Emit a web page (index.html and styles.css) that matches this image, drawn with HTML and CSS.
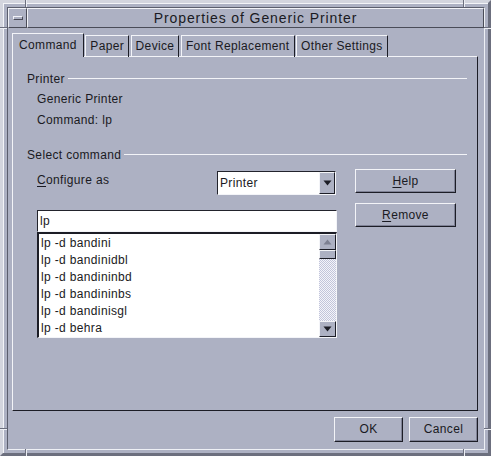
FILE: index.html
```html
<!DOCTYPE html>
<html>
<head>
<meta charset="utf-8">
<link rel="stylesheet" href="styles.css">
</head>
<body>
<div class="window">
  <i class="tick tv tl-v"></i><i class="tick th tl-h"></i>
  <i class="tick tv tr-v"></i><i class="tick th tr-h"></i>
  <i class="tick tv bl-v"></i><i class="tick th bl-h"></i>
  <i class="tick tv br-v"></i><i class="tick th br-h"></i>
  <div class="inner">
    <div class="titlebar">
      <div class="menu-btn"><span class="menu-glyph"></span></div>
      <div class="title">Properties of Generic Printer</div>
    </div>
    <div class="body">
      <div class="tabs">
        <div class="tab active">Command</div>
        <div class="tab">Paper</div>
        <div class="tab">Device</div>
        <div class="tab">Font Replacement</div>
        <div class="tab">Other Settings</div>
      </div>
      <div class="panel">
        <div class="group-head"><span>Printer</span><i class="rule"></i></div>
        <div class="info">Generic Printer</div>
        <div class="info">Command: lp</div>
        <div class="group-head gap"><span>Select command</span><i class="rule"></i></div>
        <div class="cmd">
          <div class="cmd-left">
            <div class="config-row">
              <span class="label"><u>C</u>onfigure as</span>
              <div class="combo">
                <span class="combo-text">Printer</span>
                <span class="combo-btn"><svg width="9" height="6" viewBox="0 0 9 6"><path d="M0.5 0.5h8l-4 5z" fill="#1c1d26"/></svg></span>
              </div>
            </div>
            <div class="field">lp</div>
            <div class="list">
              <div class="items">
                <div class="item">lp -d bandini</div>
                <div class="item">lp -d bandinidbl</div>
                <div class="item">lp -d bandininbd</div>
                <div class="item">lp -d bandininbs</div>
                <div class="item">lp -d bandinisgl</div>
                <div class="item">lp -d behra</div>
              </div>
              <div class="scrollbar">
                <div class="sb-btn"><svg width="9" height="6" viewBox="0 0 9 6"><path d="M0.5 5.5h8l-4-5z" fill="#7d8092"/></svg></div>
                <div class="sb-thumb"></div>
                <div class="sb-trough"></div>
                <div class="sb-btn"><svg width="9" height="6" viewBox="0 0 9 6"><path d="M0.5 0.5h8l-4 5z" fill="#1c1d26"/></svg></div>
              </div>
            </div>
          </div>
          <div class="cmd-right">
            <div class="btn"><u>H</u>elp</div>
            <div class="btn"><u>R</u>emove</div>
          </div>
        </div>
      </div>
      <div class="actions">
        <div class="btn">OK</div>
        <div class="btn">Cancel</div>
      </div>
    </div>
  </div>
</div>
</body>
</html>
```
FILE: styles.css
```css
* { box-sizing: border-box; }
html, body { margin: 0; padding: 0; }
body {
  width: 491px;
  height: 456px;
  overflow: hidden;
  background: #adb1c3;
  font-family: "Liberation Sans", Arial, sans-serif;
  font-size: 12px;
  letter-spacing: 0.35px;
  color: #1a1a22;
}
u { text-decoration: underline; text-underline-offset: 2px; }

.window {
  position: relative;
  width: 491px;
  height: 456px;
  border: 3px solid;
  border-color: #d3d5de #6c6f7e #6c6f7e #d3d5de;
  box-shadow: inset 1px 1px 0 #f3f4f8;
  padding: 4px 3px 3px 4px;
}
.tick { position: absolute; display: block; }
.tv { width: 2px; height: 7px; border-left: 1px solid #6c6f7e; border-right: 1px solid #eceef4; }
.th { width: 7px; height: 2px; border-top: 1px solid #6c6f7e; border-bottom: 1px solid #eceef4; }
.tl-v { left: 22px; top: -3px; }
.tl-h { left: -3px; top: 24px; }
.tr-v { left: 460px; top: -3px; }
.tr-h { left: 481px; top: 24px; }
.bl-v { left: 22px; top: 446px; }
.bl-h { left: -3px; top: 425px; }
.br-v { left: 460px; top: 446px; }
.br-h { left: 481px; top: 425px; }

.inner {
  height: 100%;
  border: 1px solid;
  border-color: #5b5e6d #eef0f5 #eef0f5 #5b5e6d;
  display: flex;
  flex-direction: column;
}

.titlebar { height: 20px; flex: none; display: flex; }
.menu-btn {
  width: 19px;
  border: 1px solid;
  border-color: #f1f2f7 #4a4c58 #4a4c58 #f1f2f7;
  display: flex;
  align-items: center;
  justify-content: center;
}
.menu-glyph {
  width: 10px;
  height: 4px;
  border: 1px solid;
  border-color: #f1f2f7 #4a4c58 #4a4c58 #f1f2f7;
}
.title {
  flex: 1;
  border: 1px solid;
  border-color: #f1f2f7 #4a4c58 #4a4c58 #f1f2f7;
  text-align: center;
  font-size: 14px;
  letter-spacing: 0.9px;
  line-height: 18px;
}

.body {
  flex: 1;
  display: flex;
  flex-direction: column;
  padding: 5px 6px 7px 4px;
}

.tabs {
  display: flex;
  align-items: flex-end;
  gap: 1.5px;
  height: 24px;
  flex: none;
  z-index: 1;
}
.tab {
  height: 22px;
  line-height: 21px;
  padding: 0 4px;
  border-top: 1px solid #f3f4f8;
  border-left: 1px solid #f3f4f8;
  border-right: 1px solid #1c1d26;
  white-space: nowrap;
}
.tab.active {
  height: 24px;
  line-height: 22px;
  padding: 0 6px;
  background: #adb1c3;
}

.panel {
  flex: 1;
  margin-top: -1px;
  border: 1px solid;
  border-color: #f3f4f8 #1c1d26 #1c1d26 #f3f4f8;
  padding: 11px 10px 0 14px;
}
.group-head { display: flex; align-items: center; height: 21px; }
.group-head.gap { margin-top: 13px; }
.group-head .rule { flex: 1; height: 1px; background: #f3f4f8; margin-left: 3px; }
.info { line-height: 21px; padding-left: 10px; }

.cmd { display: flex; margin-top: 4px; padding-left: 10px; }
.cmd-left { width: 300px; padding-top: 2px; }
.cmd-right { width: 101px; margin-left: 18px; display: flex; flex-direction: column; gap: 10px; }

.config-row { display: flex; justify-content: space-between; height: 24px; }
.label { line-height: 18px; }
.combo {
  width: 119px;
  height: 24px;
  margin-right: 1px;
  border: 1px solid;
  border-color: #22232c #f3f4f8 #f3f4f8 #22232c;
  background: #fff;
  display: flex;
}
.combo-text { padding-left: 2px; line-height: 22px; flex: 1; }
.combo-btn {
  width: 16px;
  background: #adb1c3;
  border: 1px solid;
  border-color: #f3f4f8 #1c1d26 #1c1d26 #f3f4f8;
  display: flex;
  align-items: center;
  justify-content: center;
}

.field {
  margin-top: 15px;
  height: 22px;
  border: 1px solid;
  border-color: #22232c #f3f4f8 #f3f4f8 #22232c;
  background: #fff;
  padding-left: 2px;
  line-height: 20px;
}

.list {
  height: 106px;
  display: flex;
  background: #fff;
  border-top: 2px solid #1c1d26;
  border-left: 2px solid #1c1d26;
  border-right: 1px solid #f3f4f8;
  border-bottom: 1px solid #f3f4f8;
}
.items { flex: 1; padding: 1px 0 0 2px; overflow: hidden; }
.item { line-height: 17px; white-space: nowrap; }

.scrollbar {
  width: 17px;
  display: flex;
  flex-direction: column;
}
.sb-btn {
  height: 16px;
  background: #adb1c3;
  border: 1px solid;
  border-color: #f3f4f8 #1c1d26 #1c1d26 #f3f4f8;
  display: flex;
  align-items: center;
  justify-content: center;
}
.sb-thumb {
  height: 9px;
  background: #adb1c3;
  border: 1px solid;
  border-color: #f3f4f8 #1c1d26 #1c1d26 #f3f4f8;
}
.sb-trough {
  flex: 1;
  background: repeating-conic-gradient(#f4f4fa 0 25%, #c2c5da 0 50%) 0 0 / 2px 2px;
}

.btn {
  height: 24px;
  border: 1px solid;
  border-color: #f3f4f8 #1c1d26 #1c1d26 #f3f4f8;
  box-shadow: inset -1px -1px 0 #7f8296;
  text-align: center;
  line-height: 22px;
}

.actions { display: flex; justify-content: flex-end; gap: 6px; margin-top: 6px; flex: none; }
.actions .btn { width: 69px; height: 25px; line-height: 23px; }
```
